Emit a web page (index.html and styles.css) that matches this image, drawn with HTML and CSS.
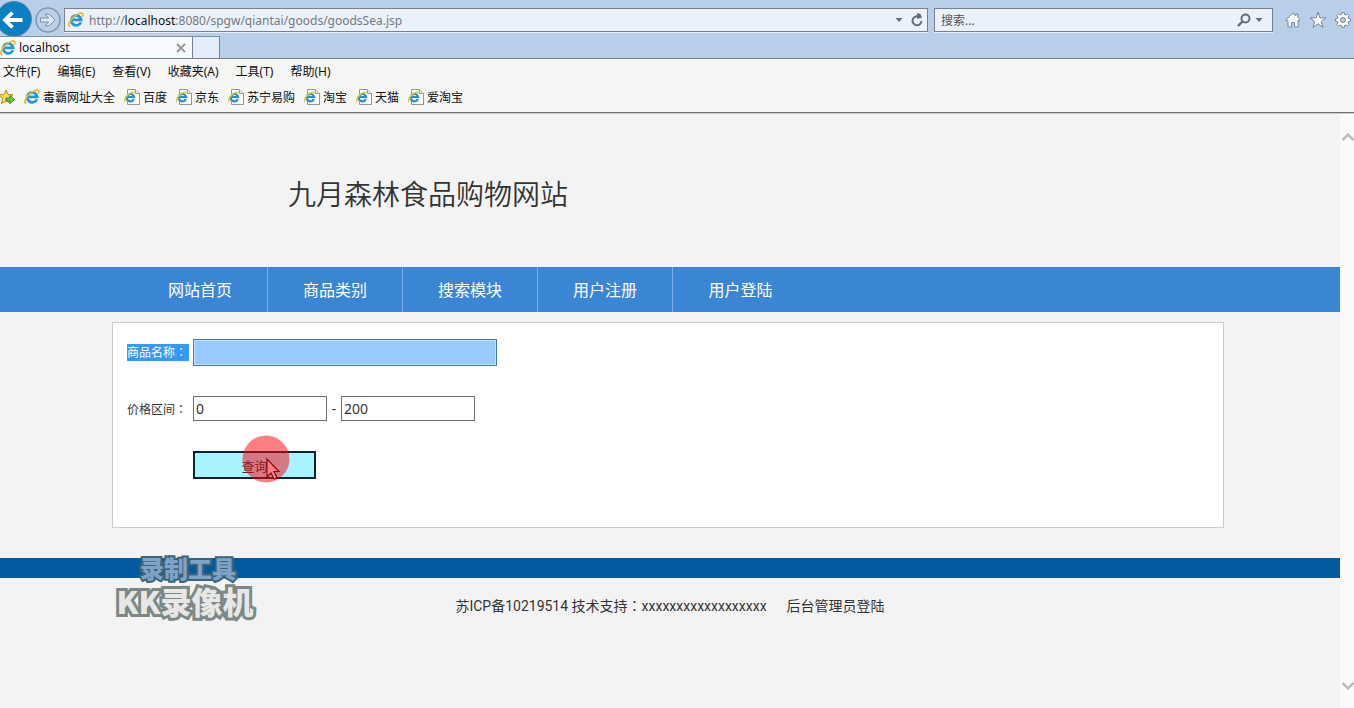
FILE: index.html
```html
<!DOCTYPE html>
<html lang="zh-CN">
<head>
<meta charset="utf-8">
<title>localhost</title>
<link rel="stylesheet" href="styles.css">
</head>
<body>
<svg class="defs" width="0" height="0" aria-hidden="true">
  <symbol id="ie" viewBox="0 0 16 16">
    <path d="M12.9 10.2A5 5 0 1 1 13.2 7.8H4.2" fill="none" stroke="#2596dc" stroke-width="2.7"/>
    <path d="M2.6 14.6C.2 14.6.3 11.500 3 7.700 6 3.600 11.500.4 14 1.300c1.200.5 1 2 .4 3.300" fill="none" stroke="#e9b92c" stroke-width="1.700"/>
  </symbol>
  <symbol id="iepage" viewBox="0 0 16 16">
    <path d="M3.500.5h8l4 4v11h-12z" fill="#fff" stroke="#959595"/>
    <path d="M11.500.5v4h4" fill="#eee" stroke="#959595"/>
    <path d="M9.900 10A3.700 3.700 0 1 1 10.100 8H3" fill="none" stroke="#2590d2" stroke-width="2.200"/>
    <path d="M1.500 13C-.2 12 1 8.500 3.500 6S9.500 2.400 11 4" fill="none" stroke="#e6cd2a" stroke-width="1.600"/>
  </symbol>
</svg>
<header class="browser">
  <div class="toolbar">
    <button class="back" aria-label="后退"><svg width="32" height="36" viewBox="0 0 32 36"><circle cx="14" cy="19" r="17.500" fill="#0a80c3" stroke="#5f86a8"/><path d="M22.500 20H5M12.500 12.500 5 20l7.500 7.500" fill="none" stroke="#fff" stroke-width="3.800"/></svg></button>
    <button class="forward" aria-label="前进"><svg width="26" height="26" viewBox="0 0 26 26"><circle cx="13" cy="13" r="12" fill="#bccfe8" stroke="#8793aa" stroke-width="1.500"/><path d="M5.500 11h8.200L10 7.300h4.200L20 13l-5.800 5.700H10l3.700-3.700H5.500z" fill="#dce8f7" stroke="#8090a8"/></svg></button>
    <div class="field address">
      <svg width="16" height="16"><use href="#ie"/></svg>
      <div class="url">http://<b>localhost</b>:8080/spgw/qiantai/goods/goodsSea.jsp</div>
      <button aria-label="下拉"><svg width="8" height="12" viewBox="0 0 8 12"><path d="M.5 4h7L4 8z" fill="#666b75"/></svg></button>
      <button aria-label="刷新"><svg width="12" height="14" viewBox="0 0 12 14"><path d="M10.500 8A4.500 4.500 0 1 1 7.500 3.500" fill="none" stroke="#666b75" stroke-width="2"/><path d="M6 0v6l5-1.500L9.500 1z" fill="#666b75"/></svg></button>
    </div>
    <div class="field search">
      <input type="text" aria-label="搜索" placeholder="搜索...">
      <button aria-label="搜索"><svg width="14" height="14" viewBox="0 0 14 14"><circle cx="8.500" cy="5.500" r="4" fill="none" stroke="#666b75" stroke-width="2"/><path d="m5.500 8.500-4.500 4.500" stroke="#666b75" stroke-width="2.400"/></svg></button>
      <button aria-label="搜索选项"><svg width="8" height="12" viewBox="0 0 8 12"><path d="M.5 4h7L4 8z" fill="#666b75"/></svg></button>
    </div>
    <div class="tools">
      <button aria-label="主页"><svg width="16" height="16" viewBox="0 0 16 16"><path d="M8 1 .8 8l1.200 1.200 1-.8V15h3.500v-4.500h3V15H13V8.400l1 .8L15.200 8 12.800 5.600V2h-2v1.700z" fill="#fff" stroke="#76839a"/></svg></button>
      <button aria-label="收藏夹"><svg width="18" height="18" viewBox="0 0 18 18"><path d="m9 1.200 2 5.700h6l-4.800 3.600 1.800 5.800-5-3.500-5 3.500 1.800-5.800L1 6.900h6z" fill="#fff" stroke="#76839a"/></svg></button>
      <button aria-label="工具"><svg width="16" height="16" viewBox="0 0 16 16"><path d="M6.700.7h2.600l.4 2 1 .4L12.500 2l1.600 1.600-1.100 1.700.4 1.100 2 .4v2.400l-2 .4-.4 1.100 1.100 1.700-1.600 1.600-1.800-1.100-1 .4-.4 2H6.700l-.4-2-1-.4L3.500 14l-1.600-1.600L3 10.700l-.4-1.100-2-.4V6.800l2-.4L3 5.300 1.900 3.600 3.500 2l1.800 1.100 1-.4z" fill="#fff" stroke="#76839a"/><circle cx="8" cy="8" r="2.500" fill="#bcd0ea" stroke="#76839a"/></svg></button>
    </div>
  </div>
  <div class="tabs">
    <div class="tab"><svg width="16" height="16"><use href="#ie"/></svg><span>localhost</span><button aria-label="关闭"><svg width="10" height="10" viewBox="0 0 10 10"><path d="m1 1 8 8M9 1 1 9" stroke="#969696" stroke-width="1.800"/></svg></button></div>
    <button class="newtab" aria-label="新建选项卡"></button>
  </div>
  <nav class="menu">
    <button>文件(F)</button><button>编辑(E)</button><button>查看(V)</button><button>收藏夹(A)</button><button>工具(T)</button><button>帮助(H)</button>
  </nav>
  <nav class="bookmarks">
    <button aria-label="添加到收藏夹栏"><svg width="15" height="16" viewBox="0 0 15 16"><path d="m6 1 2 4.500 5 .4-4 3.500 1.300 5L6 11.800 1.500 14.500l1.200-5L-1 6l5-.5z" fill="#ffdf50" stroke="#b38b18"/><path d="M6 9h4V6.500l4.500 4-4.500 4V12H6z" fill="#6cc94c" stroke="#388b2b"/></svg></button>
    <a href="#"><svg width="16" height="16"><use href="#ie"/></svg>毒霸网址大全</a>
    <a href="#"><svg width="16" height="16"><use href="#iepage"/></svg>百度</a>
    <a href="#"><svg width="16" height="16"><use href="#iepage"/></svg>京东</a>
    <a href="#"><svg width="16" height="16"><use href="#iepage"/></svg>苏宁易购</a>
    <a href="#"><svg width="16" height="16"><use href="#iepage"/></svg>淘宝</a>
    <a href="#"><svg width="16" height="16"><use href="#iepage"/></svg>天猫</a>
    <a href="#"><svg width="16" height="16"><use href="#iepage"/></svg>爱淘宝</a>
  </nav>
</header>
<div class="viewport">
  <div class="page">
    <h1>九月森林食品购物网站</h1>
    <nav class="sitenav">
      <a href="#">网站首页</a><a href="#">商品类别</a><a href="#">搜索模块</a><a href="#">用户注册</a><a href="#">用户登陆</a>
    </nav>
    <main>
      <form class="panel">
        <div class="row"><label for="name"><span class="selected">商品名称<span class="colon" lang="zh-TW">：</span></span></label><input id="name" class="name" type="text"></div>
        <div class="row"><label for="low">价格区间<span class="colon" lang="zh-TW">：</span></label><input id="low" class="price" type="text" value="0"><span class="dash">-</span><input class="price" type="text" value="200" aria-label="最高价格"></div>
        <div class="row"><span class="submit-wrap"><button type="button" class="submit">查询</button>
          <svg class="click" width="48" height="48" viewBox="0 0 48 48"><path d="M25 24v18l4-4 3 6 3-1.500-3-6h5z" fill="#fff" stroke="#111" stroke-width="1.200"/><circle cx="24" cy="24" r="23.500" fill="#ff0008" fill-opacity=".5"/></svg></span></div>
      </form>
    </main>
    <footer>
      <div class="band"><div class="watermark"><span class="small">录制工具</span><span class="large">KK录像机</span></div></div>
      <p><span>苏ICP备10219514 技术支持<span class="colon" lang="zh-TW">：</span>xxxxxxxxxxxxxxxxxx</span><a href="#">后台管理员登陆</a></p>
    </footer>
  </div>
  <div class="scrollbar">
    <svg width="14" height="10" viewBox="0 0 14 10"><path d="m2.500 8 5.500-5.500L13.500 8" fill="none" stroke="#bdbdbd" stroke-width="2.500"/></svg>
    <svg width="14" height="10" viewBox="0 0 14 10"><path d="m2.500 2 5.500 5.500L13.500 2" fill="none" stroke="#bdbdbd" stroke-width="2.500"/></svg>
  </div>
</div>
</body>
</html>
```
FILE: styles.css
```css
* { box-sizing: border-box; }
body {
  margin: 0;
  min-height: 100vh;
  display: flex;
  flex-direction: column;
  overflow: hidden;
  font-family: "Noto Sans", "Noto Sans CJK SC", sans-serif;
  font-size: 12px;
  color: #333;
  background: #f3f3f3;
}
button { border: 0; padding: 0; background: none; font: inherit; color: inherit; display: flex; align-items: center; justify-content: center; }
input { font: inherit; color: inherit; min-width: 0; outline: 0; }
a { color: inherit; text-decoration: none; }
svg { display: block; flex: none; }
.defs { position: absolute; }
.colon { font-family: "Noto Sans CJK TC", sans-serif; line-height: 1; }

.browser { color: #111; background: #f6f6f5; border-bottom: 1px solid #6e6e6e; box-shadow: 0 1px 0 #cfcfcf; position: relative; }
.toolbar { height: 36px; display: flex; align-items: center; background: #b8cee9; padding-top: 4px; padding-right: 3px; }
.back { width: 32px; height: 36px; margin-top: -4px; }
.forward { margin: 0 3px; }
.field { height: 24px; display: flex; align-items: center; background: #ebf1fa; border: 1px solid #77808f; box-shadow: 0 1px 0 #e4edf9; }
.address { flex: 1; padding: 0 4px 0 3px; gap: 8px; }
.url { flex: 1; margin-left: -3px; color: #747981; }
.url b { font-weight: 400; color: #111; }
.search { width: 339px; margin-left: 6px; padding: 0 9px 0 6px; gap: 4px; }
.search input { flex: 1; border: 0; padding: 0; background: none; }
.search input::placeholder { color: #555; opacity: 1; }
.tools { display: flex; align-items: center; gap: 8px; margin-left: 12px; }

.tabs { height: 23px; display: flex; background: #b8cee9; border-bottom: 1px solid #77808f; }
.tab { width: 193px; display: flex; align-items: center; gap: 3px; padding-right: 6px; background: #f7fafe; border-top: 1px solid #8190a5; border-right: 1px solid #77808f; }
.tab span { flex: 1; }
.newtab { width: 27px; background: #e4eefa; border-top: 1px solid #8190a5; border-right: 1px solid #77808f; }
.menu { height: 24px; display: flex; align-items: center; gap: 17px; padding-left: 3px; }
.bookmarks { height: 29px; padding-bottom: 2px; display: flex; align-items: center; gap: 9px; }
.bookmarks a { display: flex; align-items: center; gap: 3px; }

.viewport { flex: 1; display: flex; }
.page { flex: 1; min-width: 0; }
.scrollbar { width: 14px; display: flex; flex-direction: column; justify-content: space-between; padding: 19px 0 17px; background: #fafafa; }
h1 { margin: 0; padding: 61px 0 52px 288px; font-size: 28px; line-height: 41px; font-weight: 350; }
.sitenav { height: 45px; display: flex; padding-left: 133px; background: #3b86d4; color: #fff; font-size: 16px; }
.sitenav a { width: 135px; padding-bottom: 2px; display: flex; align-items: center; justify-content: center; border-right: 1px solid #74afeb; }
.sitenav a:last-child { border-right: 0; }
main { padding: 10px 116px 30px 112px; }
.panel { min-height: 206px; padding: 16px 14px; display: flex; flex-direction: column; gap: 30px; background: #fff; border: 1px solid #ccc; }
.row { display: flex; align-items: center; }
.row label { width: 66px; }
.selected { display: inline-block; width: 62px; line-height: 17px; background: #3399ff; color: #fff; }
.name { width: 304px; height: 27px; background: #99caff; border: 1px solid #4478ae; box-shadow: inset 0 0 0 1px #c5e1ff; }
.price { width: 134px; height: 25px; padding: 0 2px; border: 1px solid #707070; background: #fff; font-size: 14px; }
.dash { width: 14px; text-align: center; font-size: 14px; }
.submit-wrap { position: relative; margin-left: 66px; }
.submit { width: 123px; height: 28px; border: 2px solid #0c2430; background: #a7f3ff; font-size: 13px; }
.click { position: absolute; left: 49px; top: -16px; }
.band { position: relative; height: 20px; background: #035a9f; }
.watermark { position: absolute; left: 114px; top: -5px; width: 142px; display: flex; flex-direction: column; align-items: center; font-family: "Noto Sans CJK SC", sans-serif; font-weight: 900; white-space: nowrap; paint-order: stroke fill; }
.small { padding-left: 6px; font-size: 24px; line-height: 30px; color: #7fa2c9; -webkit-text-stroke: 4px #3c6478; }
.large { font-size: 31px; line-height: 36px; color: #e7e7e7; -webkit-text-stroke: 6px #7c8886; }
footer p { margin: 0; padding-top: 18px; display: flex; justify-content: center; gap: 20px; font-family: Roboto, "Noto Sans CJK SC", sans-serif; font-size: 14px; line-height: 20px; }
```
